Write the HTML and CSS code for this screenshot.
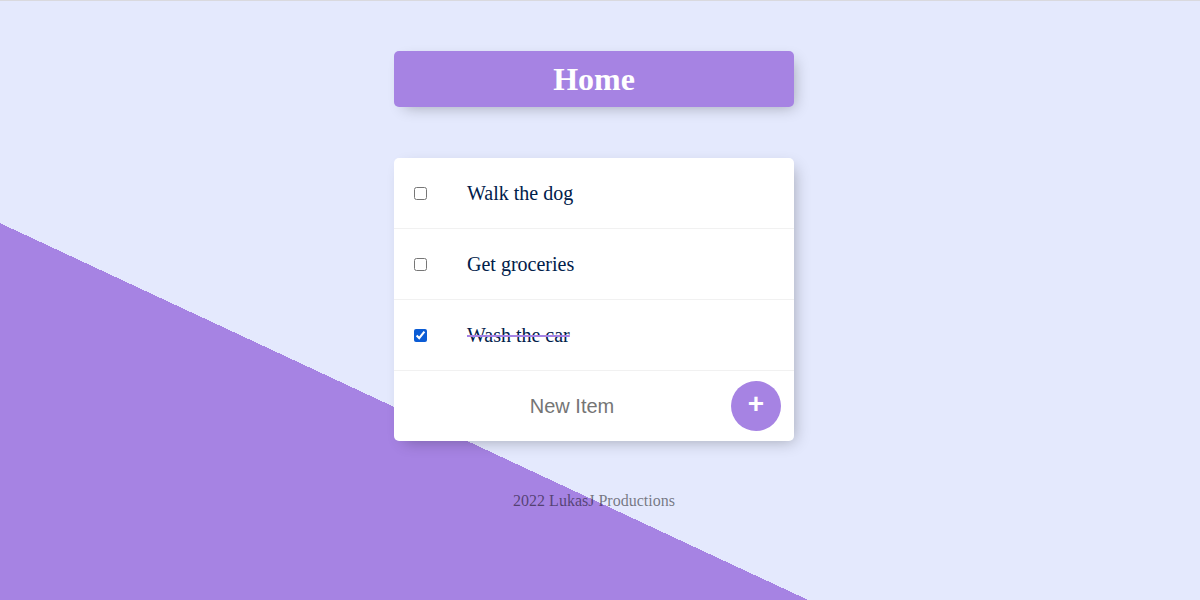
FILE: index.html
```html
<!DOCTYPE html>
<html lang="en">
<head>
<meta charset="utf-8">
<title>To-Do List</title>
<link rel="stylesheet" href="styles.css">
</head>
<body>
  <div class="box heading">
    <h1>Home</h1>
  </div>
  <div class="box list">
    <div class="item">
      <input type="checkbox">
      <p>Walk the dog</p>
    </div>
    <div class="item">
      <input type="checkbox">
      <p>Get groceries</p>
    </div>
    <div class="item">
      <input type="checkbox" checked>
      <p>Wash the car</p>
    </div>
    <form class="item new-item">
      <input type="text" class="new-input" placeholder="New Item" autocomplete="off">
      <button type="button" class="add-btn">+</button>
    </form>
  </div>
  <footer class="footer">2022 LukasJ Productions</footer>
</body>
</html>
```
FILE: styles.css
```css
html {
  min-height: 100%;
  background-color: #E4E9FD;
  background-image: linear-gradient(25deg, #A683E3 32.5%, #E4E9FD 32.5%);
  background-repeat: no-repeat;
  background-size: 100% 600px;
}

body {
  margin: 0;
  padding: 0 12px 0 0;
  border-top: 1px solid #d9d9de;
  font-family: "Liberation Serif", "Times New Roman", serif;
}

.box {
  max-width: 400px;
  margin: 50px auto;
  background: #ffffff;
  border-radius: 5px;
  box-shadow: 5px 5px 15px -5px rgba(0, 0, 0, 0.3);
}

.heading {
  background-color: #A683E3;
  text-align: center;
}

.heading h1 {
  margin: 0;
  padding: 10px;
  color: #ffffff;
  font-size: 32px;
  line-height: 36px;
  font-weight: bold;
}

.list {
  margin-top: 51px;
}

.item {
  display: flex;
  align-items: center;
  min-height: 70px;
  border-bottom: 1px solid #F1F1F1;
}

.item:last-child {
  border-bottom: none;
}

.item input[type="checkbox"] {
  margin: 20px;
  width: 13px;
  height: 13px;
  accent-color: #0b5cd5;
}

.item p {
  margin: 0;
  padding: 0 20px;
  font-size: 20px;
  font-weight: 200;
  color: #00204a;
}

.item input[type="checkbox"]:checked + p {
  text-decoration: line-through;
  text-decoration-color: #A683E3;
  text-decoration-thickness: 2px;
}

.new-item {
  margin: 0;
}

.new-input {
  box-sizing: border-box;
  width: 337px;
  height: 60px;
  padding: 0 1px 0 20px;
  border: none;
  outline: none;
  background: transparent;
  text-align: center;
  font-family: "Liberation Sans", Arial, sans-serif;
  font-size: 20px;
  font-weight: 200;
  color: #00204a;
}

.new-input::placeholder {
  color: #757575;
}

.add-btn {
  width: 50px;
  height: 50px;
  padding: 0 0 4px 0;
  border: none;
  border-radius: 50%;
  background: #A683E3;
  color: #ffffff;
  font-family: "Liberation Sans", Arial, sans-serif;
  font-size: 28px;
  font-weight: bold;
  line-height: 1;
}

.footer {
  margin: 51px 0;
  text-align: center;
  color: rgba(0, 0, 0, 0.5);
  font-size: 16px;
}
```
